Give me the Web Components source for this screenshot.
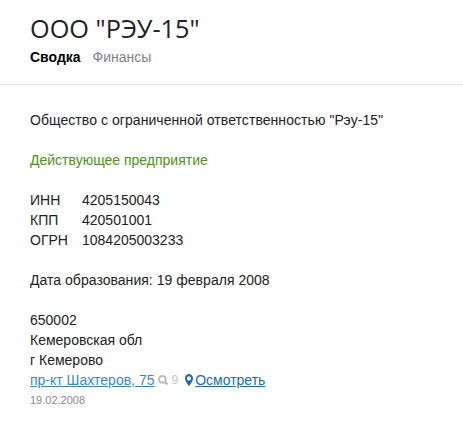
<!DOCTYPE html>
<html lang="ru">
<head>
<meta charset="utf-8">
<title>ООО "РЭУ-15"</title>
<style>
  html, body { margin: 0; background: #fff; }
  body { font: 14px/20px "Liberation Sans", Arial, sans-serif; color: #222; }
</style>
</head>
<body>
<company-page>
  <company-header slot="header" title="ООО &quot;РЭУ-15&quot;"></company-header>
  <company-summary></company-summary>
</company-page>

<script>
class CompanyPage extends HTMLElement {
  constructor() {
    super();
    this.attachShadow({ mode: 'open' });
    this.shadowRoot.innerHTML = `
      <style>
        :host { display: block; }
      </style>
      <slot name="header"></slot>
      <slot></slot>
    `;
  }
}

class CompanyHeader extends HTMLElement {
  constructor() {
    super();
    this.attachShadow({ mode: 'open' });
    this.shadowRoot.innerHTML = `
      <style>
        :host {
          display: block;
          padding: 12px 30px 19px;
          border-bottom: 1px solid #e8e8e8;
        }
        h1 {
          margin: 0;
          font: 400 25.3px/32px "Open Sans", sans-serif;
          color: #222;
        }
        nav {
          display: flex;
          gap: 12px;
          margin-top: 5px;
          line-height: 16px;
        }
        a { color: #7f7f8a; text-decoration: none; }
        a.active { color: #000; font-weight: bold; }
      </style>
      <h1>${this.getAttribute('title')}</h1>
      <nav>
        <a class="active" href="#">Сводка</a>
        <a href="#">Финансы</a>
      </nav>
    `;
  }
}

class RequisiteList extends HTMLElement {
  constructor() {
    super();
    this.attachShadow({ mode: 'open' });
    this.shadowRoot.innerHTML = `
      <style>
        :host {
          display: grid;
          grid-template-columns: 52px auto;
          justify-content: start;
        }
      </style>
      <slot></slot>
    `;
  }
}

class AddressLink extends HTMLElement {
  constructor() {
    super();
    this.attachShadow({ mode: 'open' });
    this.shadowRoot.innerHTML = `
      <style>
        :host { display: flex; align-items: center; }
        a { text-underline-offset: 1px; }
        .street { color: #3a87c8; }
        .view { color: #1a6bb0; }
        .count {
          display: inline-flex;
          align-items: center;
          gap: 3px;
          margin: 0 7px 0 4px;
          font-size: 12px;
          color: #c4c4c4;
        }
        .view-wrap { display: inline-flex; align-items: center; gap: 2px; }
        svg { display: block; }
      </style>
      <a class="street" href="#">пр-кт Шахтеров, 75</a>
      <span class="count">
        <svg width="10" height="10" viewBox="0 0 10 10" fill="none" stroke="#bdbdbd">
          <circle cx="4.4" cy="4.4" r="3.4" stroke-width="2"/>
          <path d="M6.8 6.8L9.5 9.5" stroke-width="2.4"/>
        </svg>9</span>
      <span class="view-wrap">
        <svg width="8" height="12" viewBox="0 0 9 12" preserveAspectRatio="none">
          <path fill="#1a6bb0" fill-rule="evenodd" d="M4.5 0C2 0 0 2 0 4.4 0 7.2 4.5 12 4.5 12S9 7.2 9 4.4C9 2 7 0 4.5 0zm0 2.2a2.2 2.2 0 1 1 0 4.4 2.2 2.2 0 0 1 0-4.4z"/>
        </svg>
        <a class="view" href="#">Осмотреть</a>
      </span>
    `;
  }
}

class CompanySummary extends HTMLElement {
  constructor() {
    super();
    this.attachShadow({ mode: 'open' });
    this.shadowRoot.innerHTML = `
      <style>
        :host {
          display: block;
          padding: 25px 30px 0;
        }
        p { margin: 0 0 20px; }
        .name { letter-spacing: 0.06px; }
        .founded { letter-spacing: 0.03px; }
        .status { color: #4f8f1c; }
        .date { margin-top: 1px; font-size: 11px; line-height: 18px; color: #8a8a8a; }
      </style>
      <p class="name">Общество с ограниченной ответственностью "Рэу-15"</p>
      <p class="status">Действующее предприятие</p>
      <p>
        <requisite-list>
          <span>ИНН</span><span>4205150043</span>
          <span>КПП</span><span>420501001</span>
          <span>ОГРН</span><span>1084205003233</span>
        </requisite-list>
      </p>
      <p class="founded">Дата образования: 19 февраля 2008</p>
      <div>650002</div>
      <div>Кемеровская обл</div>
      <div>г Кемерово</div>
      <address-link></address-link>
      <div class="date">19.02.2008</div>
    `;
  }
}

customElements.define('company-page', CompanyPage);
customElements.define('company-header', CompanyHeader);
customElements.define('requisite-list', RequisiteList);
customElements.define('address-link', AddressLink);
customElements.define('company-summary', CompanySummary);
</script>
</body>
</html>
